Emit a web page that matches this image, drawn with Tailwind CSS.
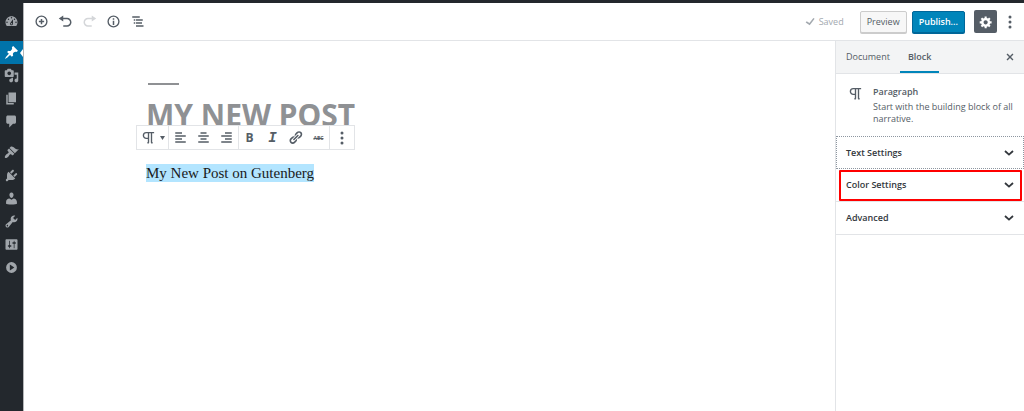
<!DOCTYPE html>
<html lang="en">
<head>
    <meta charset="UTF-8">
    <meta name="viewport" content="width=device-width, initial-scale=1.0">
    <title>Edit Post</title>
    <script src="https://cdn.jsdelivr.net/npm/@tailwindcss/browser@4"></script>
</head>
<body class="flex h-screen flex-col overflow-hidden bg-white font-['Open_Sans',sans-serif] text-[9px] text-[#555d66]">
    <!-- Admin bar -->
    <div class="h-[3px] shrink-0 bg-[#23282d]"></div>

    <div class="flex min-h-0 flex-1">
        <!-- Admin menu -->
        <nav aria-label="Admin menu" class="flex w-6 shrink-0 flex-col border-r border-[#b4b6b8] bg-[#23282d] pt-[7px] text-[#a0a5aa]">
            <a href="#" aria-label="Dashboard" class="mb-2 flex h-[23px] items-center justify-center">
                <svg class="size-[15px]" viewBox="0 0 20 20" fill="currentColor"><path fill-rule="evenodd" d="M3.76 16h12.48c1.1-1.37 1.76-3.11 1.76-5 0-4.42-3.58-8-8-8s-8 3.58-8 8c0 1.89.66 3.63 1.76 5zM10 4c.55 0 1 .45 1 1s-.45 1-1 1-1-.45-1-1 .45-1 1-1zM6 6c.55 0 1 .45 1 1s-.45 1-1 1-1-.45-1-1 .45-1 1-1zm8 0c.55 0 1 .45 1 1s-.45 1-1 1-1-.45-1-1 .45-1 1-1zm-5.37 5.55L12 7v6c0 1.1-.9 2-2 2s-2-.9-2-2c0-.57.24-1.08.63-1.45zM4 10c.55 0 1 .45 1 1s-.45 1-1 1-1-.45-1-1 .45-1 1-1zm12 0c.55 0 1 .45 1 1s-.45 1-1 1-1-.45-1-1 .45-1 1-1zm-5 3c0-.55-.45-1-1-1s-1 .45-1 1 .45 1 1 1 1-.45 1-1z"/></svg>
            </a>
            <a href="#" aria-label="Posts" class="relative flex h-[23px] items-center justify-center bg-[#0073aa] text-white">
                <svg class="size-[15px]" viewBox="0 0 20 20" fill="currentColor"><path d="M10.44 3.02l1.82-1.82 6.36 6.35-1.83 1.82c-1.05-.68-2.48-.57-3.41.36l-.75.75c-.92.93-1.04 2.35-.35 3.41l-1.83 1.82-2.41-2.41-2.8 2.79c-.42.42-3.38 2.71-3.8 2.29s1.86-3.39 2.28-3.81l2.79-2.79L4.1 9.36l1.83-1.82c1.05.69 2.48.57 3.4-.36l.75-.75c.93-.92 1.05-2.35.36-3.41z"/></svg>
                <svg class="absolute right-0 top-2 h-2 w-[3px]" viewBox="0 0 3 8" fill="currentColor"><path d="M3 0v8L0 4z"/></svg>
            </a>
            <a href="#" aria-label="Media" class="flex h-[23px] items-center justify-center">
                <svg class="size-[15px]" viewBox="0 0 20 20" fill="currentColor"><path fill-rule="evenodd" d="M13 11V4c0-.55-.45-1-1-1h-1.67L9 1H5L3.67 3H2c-.55 0-1 .45-1 1v7c0 .55.45 1 1 1h10c.55 0 1-.45 1-1zM7 4.5c1.38 0 2.5 1.12 2.5 2.5S8.38 9.5 7 9.5 4.5 8.38 4.5 7 5.62 4.5 7 4.5zM14 6h5v10.5c0 1.38-1.12 2.5-2.5 2.5S14 17.88 14 16.5s1.12-2.5 2.5-2.5c.17 0 .34.02.5.05V9h-3V6zm-4 8.05V13h2v3.5c0 1.38-1.12 2.5-2.5 2.5S7 17.88 7 16.5 8.12 14 9.5 14c.17 0 .34.02.5.05z"/></svg>
            </a>
            <a href="#" aria-label="Pages" class="flex h-[23px] items-center justify-center">
                <svg class="size-[15px]" viewBox="0 0 20 20" fill="currentColor"><path d="M6 15V2h10v13H6zm-1 1h8v2H3V5h2v11z"/></svg>
            </a>
            <a href="#" aria-label="Comments" class="mb-2 flex h-[23px] items-center justify-center">
                <svg class="size-[15px]" viewBox="0 0 20 20" fill="currentColor"><path d="M5 2h9c1.1 0 2 .9 2 2v7c0 1.1-.9 2-2 2h-2l-5 5v-5H5c-1.1 0-2-.9-2-2V4c0-1.1.9-2 2-2z"/></svg>
            </a>
            <a href="#" aria-label="Appearance" class="flex h-[23px] items-center justify-center">
                <svg class="size-[15px]" viewBox="0 0 20 20" fill="currentColor"><path d="M14.48 11.06L7.41 3.99l1.5-1.5c.5-.56 2.3-.47 3.51.32 1.21.8 1.43 1.28 2.91 2.1 1.18.64 2.45 1.26 4.45.85zm-.71.71L6.7 4.7 4.93 6.47c-.39.39-.39 1.02 0 1.41l1.06 1.06c.39.39.39 1.03 0 1.42-.6.6-1.43 1.11-2.21 1.69-.35.26-.7.53-1.01.84C1.43 14.23.4 16.08 1.4 17.07c.99 1 2.84-.03 4.18-1.36.31-.31.58-.66.85-1.02.57-.78 1.08-1.61 1.69-2.21.39-.39 1.02-.39 1.41 0l1.06 1.06c.39.39 1.02.39 1.41 0z"/></svg>
            </a>
            <a href="#" aria-label="Plugins" class="flex h-[23px] items-center justify-center">
                <svg class="size-[15px]" viewBox="0 0 20 20" fill="currentColor"><path d="M13.11 4.36L9.87 7.6 8 5.73l3.24-3.24c.35-.34 1.05-.2 1.56.32.52.51.66 1.21.31 1.55zm-8 1.77l.91-1.12 9.01 9.01-1.19.84c-.71.71-2.63 1.16-3.82 1.16H6.14L4.9 17.26c-.59.59-1.54.59-2.12 0-.59-.58-.59-1.53 0-2.12l1.24-1.24v-3.88c0-1.13.4-3.19 1.09-3.89zm7.26 3.97l3.24-3.24c.34-.35 1.04-.21 1.55.31.52.51.66 1.21.31 1.55l-3.24 3.25z"/></svg>
            </a>
            <a href="#" aria-label="Users" class="flex h-[23px] items-center justify-center">
                <svg class="size-[15px]" viewBox="0 0 20 20" fill="currentColor"><path d="M10 9.25c-2.27 0-2.73-3.44-2.73-3.44C7 4.02 7.82 2 9.97 2c2.16 0 2.98 2.02 2.71 3.81 0 0-.41 3.44-2.68 3.44zm0 2.57L12.72 10c2.39 0 4.52 2.33 4.52 4.53v2.49s-3.65 1.13-7.24 1.13c-3.65 0-7.24-1.13-7.24-1.13v-2.49c0-2.25 1.94-4.48 4.47-4.48z"/></svg>
            </a>
            <a href="#" aria-label="Tools" class="flex h-[23px] items-center justify-center">
                <svg class="size-[15px]" viewBox="0 0 20 20" fill="currentColor"><path fill-rule="evenodd" d="M16.68 9.77c-1.34 1.34-3.3 1.67-4.95.99l-5.41 6.52c-.99.99-2.59.99-3.58 0s-.99-2.59 0-3.57l6.52-5.42c-.68-1.65-.35-3.61.99-4.95 1.28-1.28 3.12-1.62 4.72-1.06l-2.89 2.89 2.82 2.82 2.86-2.87c.53 1.58.18 3.39-1.08 4.65zM3.81 16.21c.4.39 1.04.39 1.43 0 .4-.4.4-1.04 0-1.43-.39-.4-1.03-.4-1.43 0-.39.39-.39 1.03 0 1.43z"/></svg>
            </a>
            <a href="#" aria-label="Settings" class="flex h-[23px] items-center justify-center">
                <svg class="size-[15px]" viewBox="0 0 20 20" fill="currentColor"><path fill-rule="evenodd" d="M18 16V4c0-.55-.45-1-1-1H3c-.55 0-1 .45-1 1v12c0 .55.45 1 1 1h14c.55 0 1-.45 1-1zM8 11h1c.55 0 1 .45 1 1s-.45 1-1 1H8v1.5c0 .28-.22.5-.5.5s-.5-.22-.5-.5V13H6c-.55 0-1-.45-1-1s.45-1 1-1h1V5.5c0-.28.22-.5.5-.5s.5.22.5.5V11zm5-2h-1c-.55 0-1-.45-1-1s.45-1 1-1h1V5.5c0-.28.22-.5.5-.5s.5.22.5.5V7h1c.55 0 1 .45 1 1s-.45 1-1 1h-1v5.5c0 .28-.22.5-.5.5s-.5-.22-.5-.5V9z"/></svg>
            </a>
            <a href="#" aria-label="Collapse menu" class="flex h-[23px] items-center justify-center">
                <svg class="size-[15px]" viewBox="0 0 20 20" fill="currentColor"><path fill-rule="evenodd" d="M10 2.800a7.200 7.200 0 1 0 0 14.400a7.200 7.200 0 1 0 0-14.400zM7.800 6l6 4-6 4z"/></svg>
            </a>
        </nav>

        <div class="flex min-w-0 flex-1 flex-col">
            <!-- Editor header -->
            <header class="flex h-[38px] shrink-0 items-center border-b border-[#e2e4e7] pl-2.5 pr-1.5">
                <div class="flex gap-[9px]">
                    <button aria-label="Add block" class="flex size-[15px] items-center justify-center">
                        <svg class="size-[15px]" viewBox="0 0 20 20" fill="none" stroke="currentColor" stroke-width="1.800"><circle cx="10" cy="10" r="7.200"/><path stroke-width="2" d="M10 6.500v7M6.500 10h7"/></svg>
                    </button>
                    <button aria-label="Undo" class="flex size-[15px] items-center justify-center">
                        <svg class="size-[15px]" viewBox="0 0 20 20" fill="currentColor"><path d="M12 5H7V2L1 6l6 4V7h5c2.2 0 4 1.8 4 4s-1.8 4-4 4H7v2h5c3.3 0 6-2.7 6-6s-2.7-6-6-6z"/></svg>
                    </button>
                    <button aria-label="Redo" disabled class="flex size-[15px] items-center justify-center text-[#d4d6d9]">
                        <svg class="size-[15px]" viewBox="0 0 20 20" fill="currentColor"><path d="M8 5h5V2l6 4-6 4V7H8c-2.2 0-4 1.8-4 4s1.800 4 4 4h5v2H8c-3.3 0-6-2.7-6-6s2.7-6 6-6z"/></svg>
                    </button>
                    <button aria-label="Content structure" class="flex size-[15px] items-center justify-center">
                        <svg class="size-[15px]" viewBox="0 0 20 20" fill="none" stroke="currentColor" stroke-width="1.800"><circle cx="10" cy="10" r="7.200"/><path stroke-width="2" d="M10 5.500v2M10 9v5.500"/></svg>
                    </button>
                    <button aria-label="Block navigation" class="flex size-[15px] items-center justify-center">
                        <svg class="size-[15px]" viewBox="0 0 20 20" fill="currentColor"><path d="M3 3h10v2H3zM5 7h2v2H5zM8 7h9v2H8zM5 11h2v2H5zM8 11h8v2H8zM8 15h10v2H8z"/></svg>
                    </button>
                </div>
                <div class="ml-auto flex items-center">
                    <span class="mr-4 flex items-center gap-0.5 text-[#a3a9af]">
                        <svg class="size-[14px]" viewBox="0 0 20 20" fill="currentColor"><path d="M14.800 4.200l1.800 1.200-7 9.200-5.800-4 1.500-1.800 3.900 2.700z"/></svg>
                        Saved
                    </span>
                    <button class="mr-[5px] h-[22px] rounded-[2px] border border-[#cccccc] bg-[#f7f7f7] px-1.5 shadow-[0_1px_0_#cccccc]">Preview</button>
                    <button class="mr-[9px] h-[22px] rounded-[2px] border border-[#006799] bg-[#0085ba] px-1.5 font-semibold text-white shadow-[0_1px_0_#006799]">Publish...</button>
                    <button aria-label="Settings" aria-pressed="true" class="mr-[5px] flex size-[23px] items-center justify-center rounded-[2px] bg-[#555d66] text-white">
                        <svg class="size-[14px]" viewBox="0 0 20 20" fill="currentColor"><path fill-rule="evenodd" d="M18 12h-2.18c-.17.7-.44 1.35-.81 1.93l1.54 1.54-2.1 2.1-1.54-1.54c-.58.36-1.23.63-1.91.79V19H8v-2.18c-.68-.16-1.33-.43-1.91-.79l-1.54 1.54-2.12-2.12 1.54-1.54c-.36-.58-.63-1.23-.79-1.91H1V9.03h2.17c.16-.7.44-1.35.8-1.94L2.43 5.55l2.1-2.1 1.54 1.54c.58-.37 1.24-.64 1.93-.81V2h3v2.18c.68.16 1.33.43 1.91.79l1.54-1.54 2.12 2.12-1.54 1.54c.36.59.64 1.24.8 1.94H18V12zm-8.5 1.5c1.66 0 3-1.34 3-3s-1.34-3-3-3-3 1.34-3 3 1.34 3 3 3z"/></svg>
                    </button>
                    <button aria-label="More" class="flex h-[22px] w-4 items-center justify-center">
                        <svg class="h-3.5 w-1" viewBox="0 0 4 14" fill="currentColor"><circle cx="2" cy="2" r="1.500"/><circle cx="2" cy="7" r="1.500"/><circle cx="2" cy="12" r="1.500"/></svg>
                    </button>
                </div>
            </header>

            <div class="flex min-h-0 flex-1">
                <!-- Canvas -->
                <main class="min-w-0 flex-1 pl-[122px] pt-[42px]">
                    <div class="ml-0.5 h-0.5 w-[31px] bg-[#8f9194]"></div>
                    <div class="relative">
                        <h1 class="pt-3 font-['Noto_Sans',sans-serif] text-[30px] leading-9 font-bold text-[#8f9194]">MY NEW POST</h1>
                        <!-- Block toolbar -->
                        <div role="toolbar" aria-label="Block tools" class="absolute -left-2.5 top-10 flex h-[25px] border border-[#e2e4e7] bg-white">
                            <div class="flex w-8 items-center justify-center border-r border-[#e2e4e7]">
                                <button aria-label="Change block type" class="flex items-center gap-1">
                                    <svg class="size-[15px]" viewBox="0 0 20 20" fill="none" stroke="currentColor" stroke-width="1.800"><path d="M17.500 3.500H7a3.800 3.800 0 0 0 0 7.600H10M10 3.500V17M14 3.500V17M8.500 17h2M13.500 17h2"/></svg>
                                    <svg class="h-1 w-[5px]" viewBox="0 0 5 4" fill="currentColor"><path d="M0 0h5L2.500 4z"/></svg>
                                </button>
                            </div>
                            <div class="flex items-center gap-2 border-r border-[#e2e4e7] px-1">
                                <button aria-label="Align left"><svg class="size-[15px]" viewBox="0 0 20 20" fill="currentColor"><path d="M12 5V3H3v2h9zm5 4V7H3v2h14zm-5 4v-2H3v2h9zm5 4v-2H3v2h14z"/></svg></button>
                                <button aria-label="Align center"><svg class="size-[15px]" viewBox="0 0 20 20" fill="currentColor"><path d="M14 5V3H6v2h8zm3 4V7H3v2h14zm-3 4v-2H6v2h8zm3 4v-2H3v2h14z"/></svg></button>
                                <button aria-label="Align right"><svg class="size-[15px]" viewBox="0 0 20 20" fill="currentColor"><path d="M17 5V3H8v2h9zm0 4V7H3v2h14zm0 4v-2H8v2h9zm0 4v-2H3v2h14z"/></svg></button>
                            </div>
                            <div class="flex items-center gap-2 border-r border-[#e2e4e7] px-[3px]">
                                <button aria-label="Bold" class="w-[15px] text-[12px] leading-4 font-bold">B</button>
                                <button aria-label="Italic" class="w-[15px] font-['Liberation_Mono',monospace] text-[14px] leading-4 font-bold italic">I</button>
                                <button aria-label="Link"><svg class="size-[15px]" viewBox="0 0 20 20" fill="currentColor"><path d="M17.74 2.76c1.68 1.69 1.68 4.41 0 6.1l-1.53 1.52c-1.12 1.12-2.7 1.47-4.14 1.09l2.62-2.61.76-.77.76-.76c.84-.84.84-2.2 0-3.04-.84-.85-2.2-.85-3.04 0l-.77.76-3.38 3.38c-.37-1.44-.02-3.02 1.1-4.14l1.52-1.53c1.69-1.68 4.42-1.68 6.1 0zM8.59 13.43l5.34-5.34c.42-.42.42-1.1 0-1.52-.44-.43-1.13-.39-1.53 0l-5.33 5.34c-.42.42-.42 1.1 0 1.52.44.43 1.13.39 1.52 0zm-.76 2.29l4.14-4.15c.38 1.44.03 3.02-1.09 4.14l-1.52 1.53c-1.69 1.68-4.41 1.68-6.1 0-1.68-1.68-1.68-4.42 0-6.1l1.53-1.52c1.12-1.12 2.7-1.47 4.14-1.1l-4.14 4.15c-.85.84-.85 2.2 0 3.05.84.84 2.2.84 3.04 0z"/></svg></button>
                                <button aria-label="Strikethrough" class="w-[15px] text-[5px] leading-4 font-bold line-through">ABC</button>
                            </div>
                            <button aria-label="More options" class="flex w-6 items-center justify-center">
                                <svg class="h-3.5 w-1" viewBox="0 0 4 14" fill="currentColor"><circle cx="2" cy="2" r="1.500"/><circle cx="2" cy="7" r="1.500"/><circle cx="2" cy="12" r="1.500"/></svg>
                            </button>
                        </div>
                    </div>
                    <p class="mt-[31px] font-['Liberation_Serif',serif] text-[15px] leading-[18px] text-[#1a1a1a]"><mark class="inline-block bg-[#b3e5ff] text-inherit">My New Post on Gutenberg</mark></p>
                </main>

                <!-- Settings sidebar -->
                <aside aria-label="Editor settings" class="w-[189px] shrink-0 border-l border-[#e2e4e7]">
                    <div class="flex h-[33px] items-stretch border-b border-[#e2e4e7] bg-[#f3f4f5]">
                        <button class="px-2.5">Document</button>
                        <button class="border-b-2 border-[#0085ba] px-2 pt-0.5 font-semibold">Block</button>
                        <button aria-label="Close settings" class="ml-auto px-[7px]">
                            <svg class="size-[14px]" viewBox="0 0 20 20" fill="currentColor"><path d="M14.95 6.46L11.41 10l3.54 3.54-1.41 1.41L10 11.42l-3.53 3.53-1.42-1.42L8.58 10 5.05 6.47l1.42-1.42L10 8.58l3.54-3.53z"/></svg>
                        </button>
                    </div>
                    <div class="flex h-[62px] gap-2.5 pl-3 pt-3">
                        <svg class="size-[15px] shrink-0" viewBox="0 0 20 20" fill="none" stroke="currentColor" stroke-width="1.800"><path d="M17.500 3.500H7a3.800 3.800 0 0 0 0 7.600H10M10 3.500V17M14 3.500V17M8.500 17h2M13.500 17h2"/></svg>
                        <div>
                            <h2 class="mb-[3px] leading-3 font-semibold">Paragraph</h2>
                            <p class="leading-3">Start with the building block of all narrative.</p>
                        </div>
                    </div>
                    <button class="flex h-[33px] w-full items-center justify-between border border-dotted border-[#8d96a0] px-[9px] font-semibold text-[#32373c]">
                        Text Settings
                        <svg class="h-1.5 w-2.5" viewBox="0 0 10 6" fill="none" stroke="currentColor" stroke-width="1.800"><path d="M1 1l4 3.600L9 1"/></svg>
                    </button>
                    <button class="relative flex h-[33px] w-full items-center justify-between border-b border-[#e2e4e7] px-2.5 font-semibold text-[#32373c]">
                        Color Settings
                        <svg class="h-1.5 w-2.5" viewBox="0 0 10 6" fill="none" stroke="currentColor" stroke-width="1.800"><path d="M1 1l4 3.600L9 1"/></svg>
                        <!-- Highlight frame -->
                        <span class="absolute bottom-0 left-[3px] right-0.5 top-px rounded-[1px] border-2 border-[#ff0000]"></span>
                    </button>
                    <button class="flex h-[33px] w-full items-center justify-between border-b border-[#e2e4e7] px-2.5 font-semibold text-[#32373c]">
                        Advanced
                        <svg class="h-1.5 w-2.5" viewBox="0 0 10 6" fill="none" stroke="currentColor" stroke-width="1.800"><path d="M1 1l4 3.600L9 1"/></svg>
                    </button>
                </aside>
            </div>
        </div>
    </div>
</body>
</html>
